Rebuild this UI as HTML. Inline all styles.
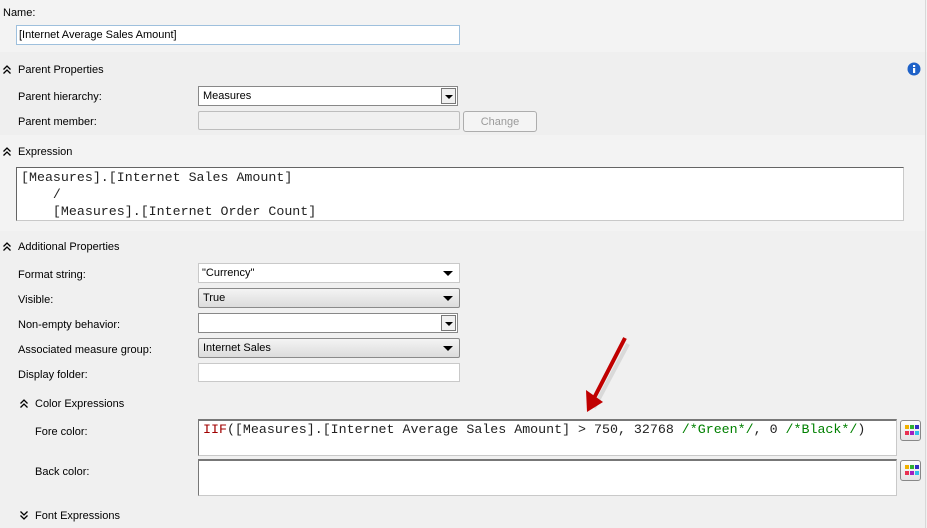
<!DOCTYPE html>
<html><head><style>
body{margin:0;width:927px;height:528px;background:#f0f0f0;font-family:"Liberation Sans",sans-serif;font-size:11px;color:#000;position:relative;overflow:hidden}
.a{position:absolute}
.lbl{position:absolute;line-height:14px}
.box{position:absolute;background:#fff;border:1px solid #c9c9c9;box-sizing:border-box}
.sel{position:absolute;box-sizing:border-box;border:1px solid #8a8a8a;border-radius:2px;background:linear-gradient(#f4f4f4,#dcdcdc);padding:2px 4px;line-height:14px}
.tri{position:absolute;right:6px;top:7px;width:0;height:0;border-left:5px solid transparent;border-right:5px solid transparent;border-top:5px solid #000}
.dd{position:absolute;right:1px;top:1px;width:15px;bottom:1px;background:#f0f0f0;border:1px solid #777;box-sizing:border-box}
.dd .tri{right:2px;top:6px;border-left-width:4px;border-right-width:4px;border-top-width:4px}
.mono{font-family:"Liberation Mono",monospace;font-size:13.3px}
.pal{position:absolute;width:21px;height:21px;box-sizing:border-box;border:1px solid #888;border-radius:3px;background:linear-gradient(#fdfdfd,#e4e4e4)}
.pal i{position:absolute;width:4px;height:4px}
</style></head><body>
<div class="a" style="left:0;top:0;width:927px;height:52px;background:#f3f3f3"></div>
<div class="a" style="left:0;top:52px;width:925px;height:83px;background:#efefef"></div>
<div class="a" style="left:0;top:135px;width:925px;height:96px;background:#f3f3f3"></div>
<div class="a" style="left:925px;top:0;width:1px;height:528px;background:#d8d8d8"></div>

<div class="lbl" style="left:3px;top:6px">Name:</div>
<div class="box" style="left:16px;top:25px;width:444px;height:20px;border-color:#9ec0dd;padding:2px 2px;line-height:14px">[Internet Average Sales Amount]</div>

<svg class="a" style="left:3px;top:65px" width="8" height="9"><path d="M0.5 4.5L4 1L7.5 4.5M0.5 8.5L4 5L7.5 8.5" stroke="#000" stroke-width="1.3" fill="none"/></svg>
<div class="lbl" style="left:18px;top:63px">Parent Properties</div>
<svg class="a" style="left:907px;top:62px" width="14" height="14"><circle cx="7" cy="7" r="6.5" fill="#1f62c8"/><rect x="6" y="6" width="2.2" height="5" fill="#fff"/><rect x="6" y="3" width="2.2" height="2" fill="#fff"/></svg>

<div class="lbl" style="left:18px;top:90px">Parent hierarchy:</div>
<div class="box" style="left:198px;top:86px;width:260px;height:20px;border-color:#888;padding:2px 4px;line-height:14px">Measures<div class="dd"><div class="tri"></div></div></div>
<div class="lbl" style="left:18px;top:115px">Parent member:</div>
<div class="a" style="left:198px;top:111px;width:262px;height:19px;box-sizing:border-box;border:1px solid #bdbdbd;border-radius:2px;background:#f0f0f0"></div>
<div class="a" style="left:463px;top:111px;width:74px;height:21px;box-sizing:border-box;border:1px solid #adadad;border-radius:3px;background:#f4f4f4;color:#9a9a9a;text-align:center;line-height:21px">Change</div>

<svg class="a" style="left:3px;top:147px" width="8" height="9"><path d="M0.5 4.5L4 1L7.5 4.5M0.5 8.5L4 5L7.5 8.5" stroke="#000" stroke-width="1.3" fill="none"/></svg>
<div class="lbl" style="left:18px;top:145px">Expression</div>
<div class="box mono" style="left:16px;top:167px;width:888px;height:54px;border-top:1px solid #646464;border-left:1px solid #646464;padding:1px 4px;line-height:17px;white-space:pre;overflow:hidden;color:#222">[Measures].[Internet Sales Amount]
    /
    [Measures].[Internet Order Count]</div>

<svg class="a" style="left:3px;top:242px" width="8" height="9"><path d="M0.5 4.5L4 1L7.5 4.5M0.5 8.5L4 5L7.5 8.5" stroke="#000" stroke-width="1.3" fill="none"/></svg>
<div class="lbl" style="left:18px;top:240px">Additional Properties</div>

<div class="lbl" style="left:18px;top:268px">Format string:</div>
<div class="box" style="left:198px;top:263px;width:262px;height:20px;padding:2px 3px;line-height:14px">"Currency"<div class="tri" style="top:7px"></div></div>
<div class="lbl" style="left:18px;top:293px">Visible:</div>
<div class="sel" style="left:198px;top:288px;width:262px;height:20px">True<div class="tri"></div></div>
<div class="lbl" style="left:18px;top:318px">Non-empty behavior:</div>
<div class="box" style="left:198px;top:313px;width:260px;height:20px;border-color:#888"><div class="dd"><div class="tri"></div></div></div>
<div class="lbl" style="left:18px;top:343px">Associated measure group:</div>
<div class="sel" style="left:198px;top:338px;width:262px;height:20px">Internet Sales<div class="tri"></div></div>
<div class="lbl" style="left:18px;top:368px">Display folder:</div>
<div class="box" style="left:198px;top:363px;width:262px;height:19px"></div>

<svg class="a" style="left:20px;top:399px" width="8" height="9"><path d="M0.5 4.5L4 1L7.5 4.5M0.5 8.5L4 5L7.5 8.5" stroke="#000" stroke-width="1.3" fill="none"/></svg>
<div class="lbl" style="left:35px;top:397px">Color Expressions</div>

<div class="lbl" style="left:35px;top:425px">Fore color:</div>
<div class="box mono" style="left:198px;top:419px;width:699px;height:37px;border-top:2px solid #777;border-left:1px solid #777;padding:0 4px;line-height:17px;white-space:pre;overflow:hidden;color:#222"><span style="color:#a00000">IIF</span>([Measures].[Internet Average Sales Amount] &gt; 750, 32768 <span style="color:#008000">/*Green*/</span>, 0 <span style="color:#008000">/*Black*/</span>)</div>
<div class="pal" style="left:900px;top:420px"><i style="left:4px;top:4px;background:#f0b000"></i><i style="left:9px;top:4px;background:#30b030"></i><i style="left:14px;top:4px;background:#3030c0"></i><i style="left:4px;top:10px;background:#e83050"></i><i style="left:9px;top:10px;background:#a020c0"></i><i style="left:14px;top:10px;background:#30c0e8"></i></div>

<div class="lbl" style="left:35px;top:465px">Back color:</div>
<div class="box" style="left:198px;top:459px;width:699px;height:37px;border-top:2px solid #777;border-left:1px solid #777"></div>
<div class="pal" style="left:900px;top:460px"><i style="left:4px;top:4px;background:#f0b000"></i><i style="left:9px;top:4px;background:#30b030"></i><i style="left:14px;top:4px;background:#3030c0"></i><i style="left:4px;top:10px;background:#e83050"></i><i style="left:9px;top:10px;background:#a020c0"></i><i style="left:14px;top:10px;background:#30c0e8"></i></div>

<svg class="a" style="left:20px;top:511px" width="8" height="9"><path d="M0.5 0.5L4 4L7.5 0.5M0.5 4.5L4 8L7.5 4.5" stroke="#000" stroke-width="1.3" fill="none"/></svg>
<div class="lbl" style="left:35px;top:509px">Font Expressions</div>

<svg class="a" style="left:580px;top:330px" width="60" height="90">
<path d="M48 14 L14 78" stroke="#999" stroke-width="4" opacity="0.25"/>
<path d="M45 8 L12 72" stroke="#c00000" stroke-width="4"/>
<path d="M7 82 L6 60 L23 72 Z" fill="#c00000"/>
</svg>
</body></html>
